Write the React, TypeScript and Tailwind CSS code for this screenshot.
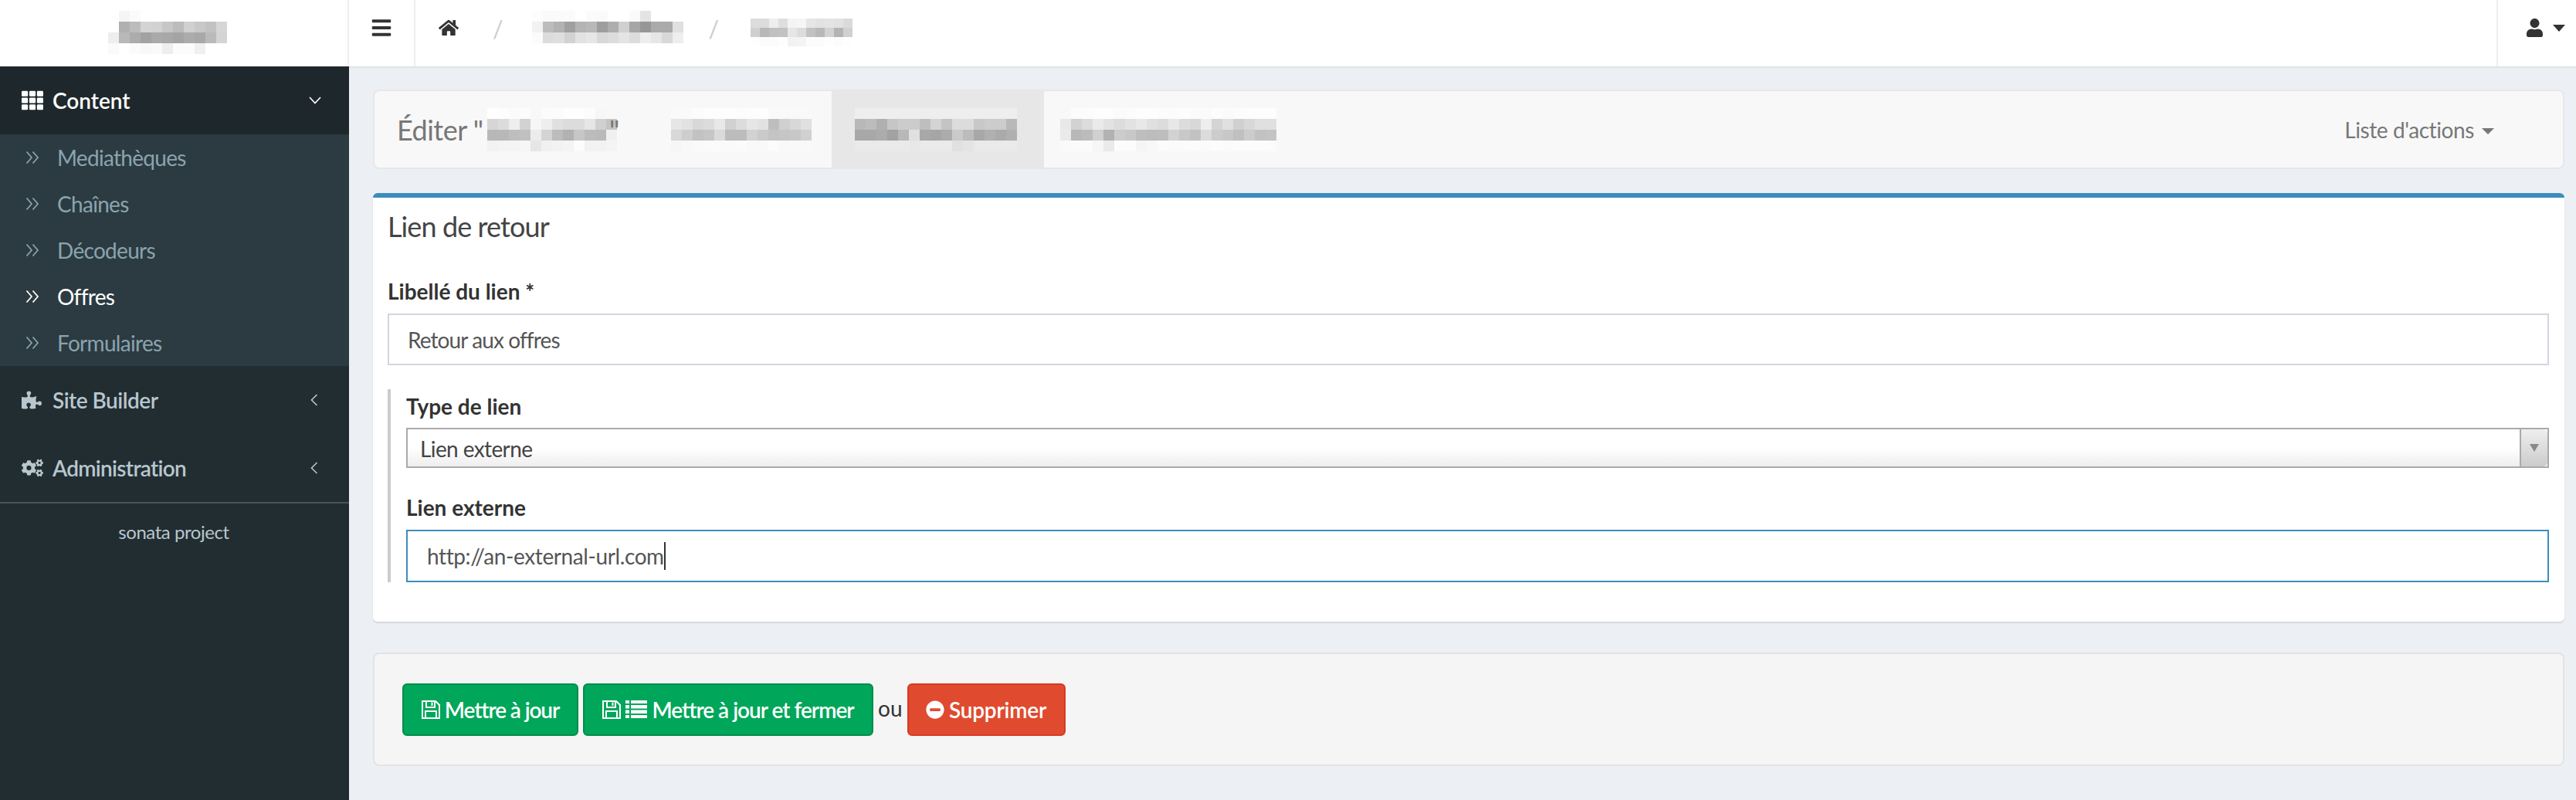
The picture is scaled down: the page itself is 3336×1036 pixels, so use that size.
import { FaBars, FaCogs, FaHome, FaMinusCircle, FaPuzzlePiece, FaTh, FaUser } from "react-icons/fa";

// Pixelated (redacted) text blocks: each row is a list of grey levels, ".." leaves a cell empty
function Mosaic({ rows, w = 14, h = 14 }: { rows: string[]; w?: number; h?: number }) {
  const cells = rows.map((r) => r.split(" "));
  const cols = Math.max(...cells.map((r) => r.length));
  return (
    <svg width={cols * w} height={cells.length * h} shapeRendering="crispEdges" className="shrink-0">
      {cells.map((row, y) =>
        row.map((v, x) =>
          v === ".." ? null : <rect key={`${x}-${y}`} x={x * w} y={y * h} width={w} height={h} fill={`#${v}${v}${v}`} />,
        ),
      )}
    </svg>
  );
}

function DoubleAngle() {
  return (
    <svg width="18" height="18" viewBox="0 0 18 18" fill="none" stroke="currentColor" strokeWidth="1.8" className="shrink-0">
      <polyline points="1.5,1.5 8,9 1.5,16.5" />
      <polyline points="9.5,1.5 16,9 9.5,16.5" />
    </svg>
  );
}

function AngleLeft() {
  return (
    <svg width="10" height="16" viewBox="0 0 10 16" fill="none" stroke="currentColor" strokeWidth="1.6">
      <polyline points="8.5,1 1.5,8 8.5,15" />
    </svg>
  );
}

// font-awesome 4 floppy outline
function SaveIcon() {
  return (
    <svg width="24" height="24" viewBox="0 0 24 24" fill="none" stroke="currentColor" strokeWidth="2" className="shrink-0">
      <path d="M1 1H18L23 6V23H1Z" />
      <path d="M6 1V9H17V1" />
      <path d="M5 23V14H19V23" />
      <path d="M13.5 2.5V7" />
    </svg>
  );
}

// font-awesome 4 list: four rows with square bullets
function ListIcon() {
  return (
    <svg width="28" height="23" viewBox="0 0 28 23" fill="currentColor" className="shrink-0">
      <path d="M0 0H5V4H0ZM7 0H28V4H7ZM0 6H5V10.500H0ZM7 6H28V10.500H7ZM0 12.500H5V17H0ZM7 12.500H28V17H7ZM0 19H5V23H0ZM7 19H28V23H7Z" />
    </svg>
  );
}

const SUB_ITEMS = ["Mediathèques", "Chaînes", "Décodeurs", "Offres", "Formulaires"];

function Sidebar() {
  return (
    <aside className="w-[452px] shrink-0 bg-[#222d32]">
      <div className="flex h-[88px] items-center bg-[#1e282c] pl-[28px] pr-[36px] text-white">
        <FaTh className="h-[28px] w-[28px]" />
        <span className="ml-[12px] text-[28px] font-semibold">Content</span>
        <svg width="16" height="10" viewBox="0 0 16 10" fill="none" stroke="currentColor" strokeWidth="1.6" className="ml-auto">
          <polyline points="1,1 8,8.5 15,1" />
        </svg>
      </div>
      <ul className="h-[300px] bg-[#2c3b41]">
        {SUB_ITEMS.map((item) => (
          <li
            key={item}
            className={`flex h-[60px] items-center pl-[33px] text-[28px] tracking-[-0.7px] ${item === "Offres" ? "text-white" : "text-[#8aa4af]"}`}
          >
            <DoubleAngle />
            <span className="ml-[23px]">{item}</span>
          </li>
        ))}
      </ul>
      <div className="flex h-[88px] items-center pl-[28px] pr-[40px] text-[#b8c7ce]">
        <FaPuzzlePiece className="h-[26px] w-[26px]" />
        <span className="ml-[14px] text-[28px] font-semibold tracking-[-0.5px]">Site Builder</span>
        <span className="ml-auto"><AngleLeft /></span>
      </div>
      <div className="flex h-[90px] items-center border-b-[2px] border-[#4b5357] pl-[28px] pr-[40px] text-[#b8c7ce]">
        <FaCogs className="h-[28px] w-[28px]" />
        <span className="ml-[12px] text-[28px] font-semibold tracking-[-0.7px]">Administration</span>
        <span className="ml-auto"><AngleLeft /></span>
      </div>
      <p className="pr-[2px] pt-[18px] text-center text-[24px] leading-[38px] tracking-[-0.45px] text-[#b8c7ce]">sonata project</p>
    </aside>
  );
}

function Header() {
  return (
    <header className="flex h-[86px] shrink-0 bg-white text-[#333] shadow-[0_1px_2px_rgba(0,0,0,0.1)]">
      <div className="w-[452px] shrink-0 border-r-[2px] border-[#eee] pl-[140px] pt-[14px]">
        <Mosaic
          rows={[
            ".. f5 fb",
            ".. b0 bc d4 d2 c6 bc d0 c8 c2 d6",
            "ee b8 ac a2 aa a8 a4 ac a8 ba d4",
            "fa ff fb f8 fa ee fb fb f0",
          ]}
        />
      </div>
      <div className="flex w-[86px] shrink-0 items-start justify-center border-r-[2px] border-[#eee] pt-[22px]">
        <FaBars className="h-[28px] w-[26px]" />
      </div>
      <div className="flex flex-1 items-start">
        <FaHome className="ml-[30px] mt-[23px] h-[26px] w-[26px]" />
        <span className="ml-[44px] mt-[17px] text-[30px] leading-[40px] text-[#ccc]">/</span>
        <div className="ml-[37px] mt-[14px]">
          <Mosaic
            rows={[
              "fd fa fa fb ff fb fa ff ff fa e4",
              "f2 bc b2 a0 b4 b8 9e ae d0 a6 96 aa aa e0",
              "fb dc de d2 e2 e6 d8 dc e4 dc ee e6 d8 ee",
            ]}
          />
        </div>
        <span className="ml-[33px] mt-[17px] text-[30px] leading-[40px] text-[#ccc]">/</span>
        <div className="ml-[41px] mt-[24px]">
          <Mosaic
            w={12}
            h={12}
            rows={[
              "dc dc ee de f4 f6 e6 e2 e4 e2 da",
              "d0 b8 c0 c2 e6 dc c2 b8 d2 b4 d0",
              "fe fb fb fe f2 f4 fc fc fe fc fe",
            ]}
          />
        </div>
      </div>
      <div className="flex w-[103px] shrink-0 items-start border-l-[2px] border-[#eee] pl-[37px] pt-[24px]">
        <FaUser className="h-[24px] w-[21px]" />
        <span className="ml-[13px] mt-[8px] h-0 w-0 border-x-[8px] border-t-[9px] border-x-transparent border-t-[#333]" />
      </div>
    </header>
  );
}

function TitleBar() {
  return (
    <div className="flex h-[103px] items-stretch rounded-[8px] border-[2px] border-[#e7e7e7] bg-[#f8f8f8] text-[#777]">
      <div className="flex w-[384px] shrink-0 items-center pl-[29px] text-[36px] tracking-[-0.5px]">
        <span className="w-[117px] shrink-0 whitespace-nowrap">Éditer "</span>
        <Mosaic
          rows={[
            "ff fd fb fc f8 fb fc fe fe fc f7",
            "d6 dc ee d2 f6 ee e0 dc dc e6 d0 c4",
            "b8 b8 be c0 ec d4 bc b2 c6 bc ba f0",
            "f2 f4 f4 f6 e6 f0 f2 f4 fc f2 f2 f4",
          ]}
        />
        <span className="-ml-[10px]">"</span>
      </div>
      <div className="flex w-[208px] shrink-0 items-center">
        <Mosaic
          rows={[
            "fa fa fc fd fd fd fc fd fd f9 f9 f9 f9",
            "e6 e2 d8 dc e8 d0 dc e6 e2 be d0 d8 e0",
            "d8 ce c2 c6 da bc bc d2 ca c4 c6 c8 d0",
            "f6 f8 fa fb fa fa fb f9 f9 fc f9 f9 f9",
          ]}
        />
      </div>
      <div className="flex w-[275px] shrink-0 items-center bg-[#e7e7e7] pl-[30px]">
        <Mosaic
          rows={[
            "ee ee ee ee ee ee ee ee ee ee ee ee ee ee ee",
            "b8 bc b0 c6 cc cc be d4 c4 dc dc c8 cc cc b8",
            "a8 a8 ac a2 b8 e0 a8 a6 ac ca bc a8 b0 aa b0",
            "ea ea ea ea ea e8 ea ea ea e0 e4 ea ea ea ea",
          ]}
        />
      </div>
      <div className="flex items-center pl-[21px]">
        <Mosaic
          rows={[
            "f8 fc fc fd fd fb fc fd fd fc fc fd fb fb fd fb fc fd fd fd",
            "e8 d2 dc ea e2 dc e2 e8 e0 dc e8 dc d8 ee d4 e0 d0 d8 e0 e0",
            "ea b8 bc d0 b2 cc c8 be bc be d2 c8 c2 dc cc c8 c0 cc c2 c4",
            "fa fb fb f6 ea fc fc f5 f8 fc fb fb fc fb fc fb fc fc fc fb",
          ]}
        />
      </div>
      <div className="ml-auto flex items-center pr-[89px] text-[28px] tracking-[-0.4px]">
        <span>Liste d'actions</span>
        <span className="ml-[10px] mt-[4px] h-0 w-0 border-x-[8px] border-t-[8px] border-x-transparent border-t-[#777]" />
      </div>
    </div>
  );
}

function FormBox() {
  return (
    <section className="mt-[31px] h-[555px] rounded-[6px] border-t-[6px] border-[#3c8dbc] bg-white pl-[19px] pr-[20px] shadow-[0_2px_2px_rgba(0,0,0,0.1)]">
      <h3 className="pt-[16px] text-[36px] leading-[42px] tracking-[-0.9px] text-[#444]">Lien de retour</h3>
      <label className="mt-[43px] block text-[28px] font-bold leading-[40px] text-[#333]">Libellé du lien *</label>
      <input
        readOnly
        value="Retour aux offres"
        className="mt-[9px] block h-[67px] w-full border-[2px] border-[#d2d6de] px-[24px] text-[28px] tracking-[-0.9px] text-[#555]"
      />
      <div className="mt-[31px] h-[250px] border-l-[4px] border-[#ccc] pl-[20px] pt-[2px]">
        <label className="block text-[28px] font-bold leading-[40px] text-[#333]">Type de lien</label>
        <div className="mt-[8px] flex h-[52px] border-[2px] border-[#aaa] bg-gradient-to-b from-white from-50% to-[#eee] pl-[16px] text-[28px] tracking-[-0.6px] text-[#444]">
          <span className="flex-1 leading-[50px]">Lien externe</span>
          <span className="flex w-[36px] items-center justify-center rounded-r-[6px] border-l-[2px] border-[#aaa] bg-gradient-to-b from-[#eee] to-[#ccc]">
            <span className="h-0 w-0 border-x-[6px] border-t-[10px] border-x-transparent border-t-[#888]" />
          </span>
        </div>
        <label className="mt-[31px] block text-[28px] font-bold leading-[40px] text-[#333]">Lien externe</label>
        <div className="mt-[9px] flex h-[68px] items-center border-[2px] border-[#3c8dbc] pl-[25px] text-[28px] tracking-[-0.4px] text-[#555]">
          <span>http://an-external-url.com</span>
          <span className="h-[36px] w-[2px] bg-[#333]" />
        </div>
      </div>
    </section>
  );
}

function ActionBar() {
  const btn = "flex h-[68px] items-center justify-center gap-[6px] rounded-[6px] border-[2px] text-[28px] font-semibold text-white";
  return (
    <div className="mt-[40px] flex h-[147px] items-center rounded-[8px] border-[2px] border-[#e3e3e3] bg-[#f5f5f5] pl-[36px]">
      <button className={`${btn} w-[228px] border-[#008d4c] bg-[#00a65a] tracking-[-1.1px]`}>
        <SaveIcon />
        Mettre à jour
      </button>
      <button className={`${btn} ml-[6px] w-[376px] border-[#008d4c] bg-[#00a65a] tracking-[-1px]`}>
        <SaveIcon />
        <ListIcon />
        Mettre à jour et fermer
      </button>
      <span className="mx-[6px] mb-[4px] text-[28px] text-[#333]">ou</span>
      <button className={`${btn} w-[205px] border-[#d73925] bg-[#e04b30] tracking-[-0.2px]`}>
        <FaMinusCircle className="h-[24px] w-[24px]" />
        Supprimer
      </button>
    </div>
  );
}

export default function App() {
  return (
    <div className="flex h-[1036px] w-[3336px] flex-col overflow-hidden bg-[#ecf0f5] font-['Lato','Liberation_Sans',sans-serif]">
      <Header />
      <div className="flex flex-1">
        <Sidebar />
        <main className="flex-1 pl-[31px] pr-[15px] pt-[30px]">
          <TitleBar />
          <FormBox />
          <ActionBar />
        </main>
      </div>
    </div>
  );
}
